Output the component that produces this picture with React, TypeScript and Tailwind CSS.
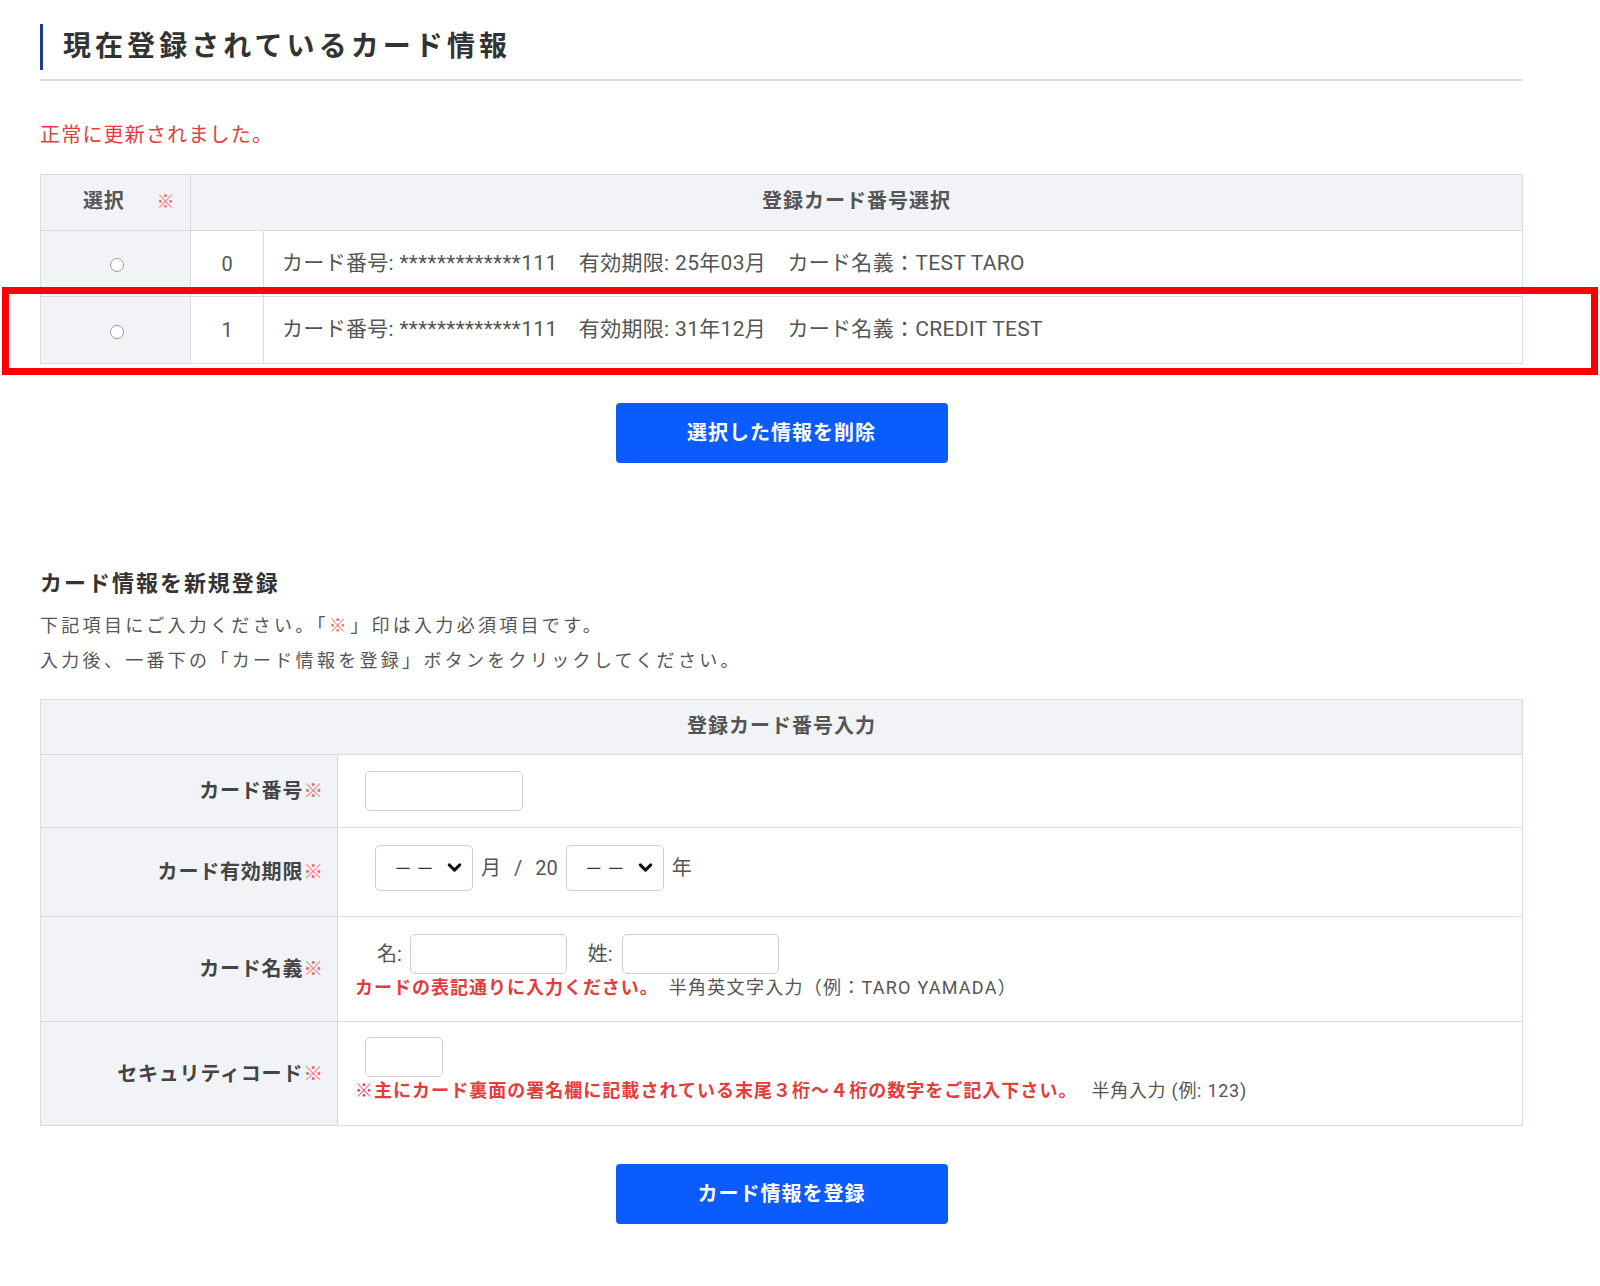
import { ChevronDown } from "lucide-react";

const cardRows = [
  { no: 0, text: "カード番号: *************111　有効期限: 25年03月　カード名義：TEST TARO", h: "h-[66px]" },
  { no: 1, text: "カード番号: *************111　有効期限: 31年12月　カード名義：CREDIT TEST", h: "h-[67px]" },
];

const Required = () => <span className="font-normal text-[#f06a6a]">※</span>;

const FakeSelect = () => (
  <div className="relative h-[46px] w-[98px]">
    <select className="h-full w-full appearance-none rounded-[5px] border border-[#cfcfcf] bg-white pl-[18px] text-[18px] tracking-[4px] text-[#333]">
      <option>－－</option>
    </select>
    {/* arrow drawn over the native select */}
    <ChevronDown className="pointer-events-none absolute right-[8px] top-[12px] h-[21px] w-[21px] text-[#111]" strokeWidth={3.5} />
  </div>
);

const App = () => {
  return (
    <div
      className="relative min-h-[1286px] w-[1600px] bg-white text-[#555]"
      style={{ fontFamily: 'Roboto, "Noto Sans CJK JP", "Noto Sans", sans-serif' }}
    >
      <div className="w-[1563px] px-[40px] pt-[24px]">
        {/* Title */}
        <div className="border-b-2 border-[#d8dde3] pb-[9px]">
          <div className="flex h-[46px] items-center border-l-[3px] border-[#1b3f8f] pl-[20px]">
            <h1 className="text-[28px] font-bold tracking-[0.145em] text-[#333]">現在登録されているカード情報</h1>
          </div>
        </div>

        <p className="mt-[39px] text-[20px] leading-[30px] tracking-[0.06em] text-[#e43c3c]">正常に更新されました。</p>

        {/* Registered cards */}
        <table className="mt-[24px] w-full border-collapse">
          <thead>
            <tr className="h-[56px] bg-[#f1f3f6]">
              <th className="w-[150px] border border-[#d7dce3] pl-[42px] pb-[3px] text-left text-[20px] font-bold tracking-[0.04em] text-[#555]">
                選択<span className="ml-[32px] text-[18px] font-normal text-[#f06a6a]">※</span>
              </th>
              <th colSpan={2} className="border border-[#d7dce3] pb-[3px] text-[20px] font-bold tracking-[0.05em] text-[#555]">
                登録カード番号選択
              </th>
            </tr>
          </thead>
          <tbody>
            {cardRows.map((row) => (
              <tr key={row.no} className={row.h}>
                <td className="w-[150px] border border-[#d7dce3] bg-[#f1f3f6]">
                  <div className="flex justify-center pl-[3px] pt-[3px]">
                    <span className="block h-[14px] w-[14px] rounded-full border border-[#9a9a9a] bg-white" />
                  </div>
                </td>
                <td className="w-[73px] border border-[#d7dce3] text-center text-[20px]">{row.no}</td>
                <td className="border border-[#d7dce3] pl-[18px] text-[21px] tracking-[0.015em]">{row.text}</td>
              </tr>
            ))}
          </tbody>
        </table>

        <div className="mt-[39px] flex justify-center">
          <button className="h-[60px] w-[332px] rounded-[4px] bg-[#0b5cff] text-[20px] font-bold tracking-[0.05em] text-white">
            選択した情報を削除
          </button>
        </div>

        {/* New card */}
        <h2 className="mt-[105px] text-[22px] font-bold leading-[32px] tracking-[0.09em] text-[#333]">カード情報を新規登録</h2>
        <div className="mt-[8px] text-[18px] leading-[35px] tracking-[3.3px] text-[#555]">
          <p>
            下記項目にご入力ください。「<span className="text-[#f06a6a]">※</span>」印は入力必須項目です。
          </p>
          <p>入力後、一番下の「カード情報を登録」ボタンをクリックしてください。</p>
        </div>

        <table className="mt-[21px] w-full border-collapse">
          <thead>
            <tr className="h-[55px] bg-[#f1f3f6]">
              <th colSpan={2} className="border border-[#d7dce3] pb-[2px] text-[20px] font-bold tracking-[0.05em] text-[#555]">
                登録カード番号入力
              </th>
            </tr>
          </thead>
          <tbody>
            <tr className="h-[73px]">
              <th className="w-[297px] border border-[#d7dce3] bg-[#f1f3f6] pr-[13px] text-right text-[20px] font-bold tracking-[0.04em] text-[#444]">
                カード番号<Required />
              </th>
              <td className="border border-[#d7dce3] pl-[27px]">
                <input className="block h-[40px] w-[158px] rounded-[5px] border border-[#cfcfcf] bg-white" />
              </td>
            </tr>
            <tr className="h-[89px]">
              <th className="border border-[#d7dce3] bg-[#f1f3f6] pr-[13px] text-right text-[20px] font-bold tracking-[0.04em] text-[#444]">
                カード有効期限<Required />
              </th>
              <td className="border border-[#d7dce3] pb-[8px] pl-[37px]">
                <div className="flex items-center text-[20px] text-[#555]">
                  <FakeSelect />
                  <span className="ml-[8px]">月</span>
                  <span className="ml-[13px]">/</span>
                  <span className="ml-[13px]">20</span>
                  <div className="ml-[8px]">
                    <FakeSelect />
                  </div>
                  <span className="ml-[8px]">年</span>
                </div>
              </td>
            </tr>
            <tr className="h-[105px]">
              <th className="border border-[#d7dce3] bg-[#f1f3f6] pr-[13px] text-right text-[20px] font-bold tracking-[0.04em] text-[#444]">
                カード名義<Required />
              </th>
              <td className="border border-[#d7dce3] pb-[5px] pl-[17px]">
                <div className="flex items-center text-[20px] text-[#555]">
                  <span className="ml-[22px]">名:</span>
                  <input className="ml-[8px] block h-[40px] w-[157px] rounded-[5px] border border-[#cfcfcf] bg-white" />
                  <span className="ml-[21px]">姓:</span>
                  <input className="ml-[9px] block h-[40px] w-[157px] rounded-[5px] border border-[#cfcfcf] bg-white" />
                </div>
                <p className="mt-[2px] text-[18px] leading-[24px]">
                  <span className="font-bold tracking-[0.055em] text-[#e43c3c]">カードの表記通りに入力ください。</span>
                  <span className="ml-[10px] tracking-[0.07em] text-[#555]">半角英文字入力（例：TARO YAMADA）</span>
                </p>
              </td>
            </tr>
            <tr className="h-[104px]">
              <th className="border border-[#d7dce3] bg-[#f1f3f6] pr-[13px] text-right text-[20px] font-bold tracking-[0.04em] text-[#444]">
                セキュリティコード<Required />
              </th>
              <td className="border border-[#d7dce3] pb-[8px] pl-[17px]">
                <input className="ml-[10px] block h-[40px] w-[78px] rounded-[5px] border border-[#cfcfcf] bg-white" />
                <p className="mt-[2px] text-[18px] leading-[24px]">
                  <span className="font-bold tracking-[0.057em] text-[#e43c3c]">※主にカード裏面の署名欄に記載されている末尾３桁～４桁の数字をご記入下さい。</span>
                  <span className="ml-[14px] tracking-[0.04em] text-[#555]">半角入力 (例: 123)</span>
                </p>
              </td>
            </tr>
          </tbody>
        </table>

        <div className="mt-[38px] flex justify-center">
          <button className="h-[60px] w-[332px] rounded-[4px] bg-[#0b5cff] text-[20px] font-bold tracking-[0.05em] text-white">
            カード情報を登録
          </button>
        </div>
      </div>

      {/* red annotation frame around the second card row */}
      <div className="pointer-events-none absolute left-[2px] top-[287px] h-[88px] w-[1596px] border-[7px] border-[#ff0000]" />
    </div>
  );
};

export default App;
